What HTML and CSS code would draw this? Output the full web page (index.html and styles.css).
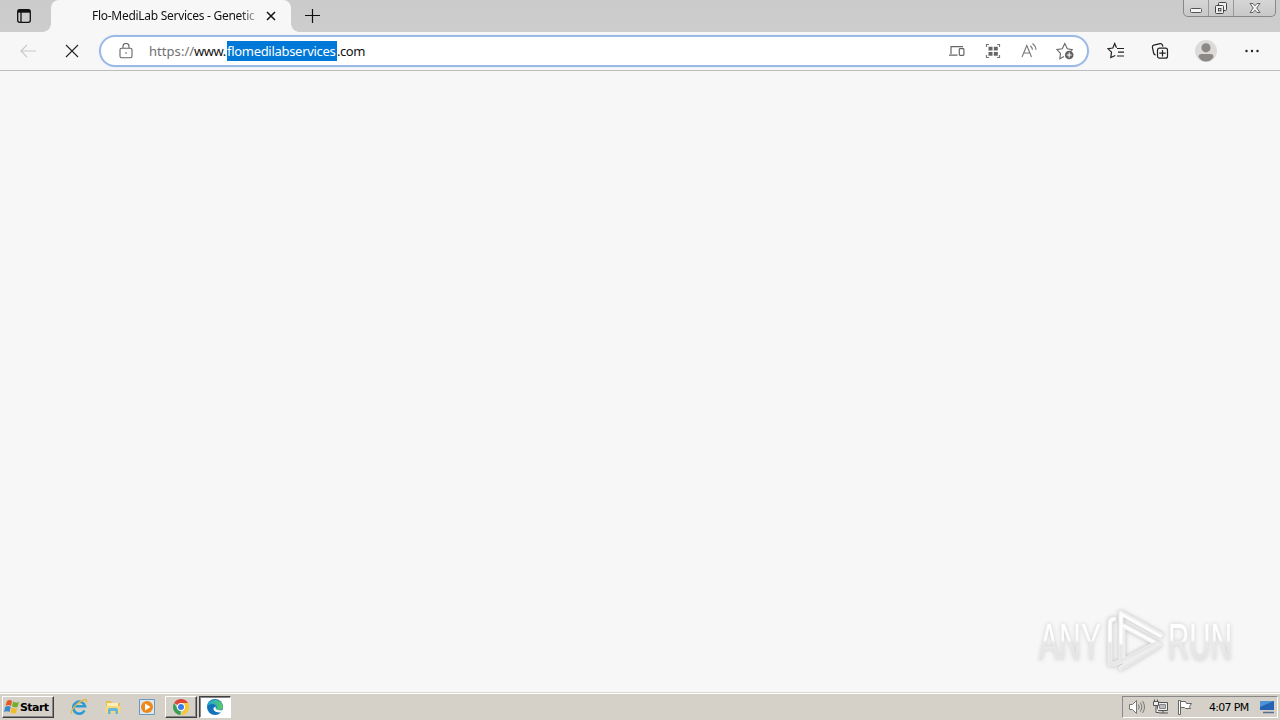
FILE: index.html
```
<!DOCTYPE html>
<html lang="en">
<head>
<meta charset="utf-8">
<title>Flo-MediLab Services - Genetic</title>
<link rel="stylesheet" href="styles.css">
</head>
<body>
<header class="tabstrip">
  <div class="tab-actions"><svg width="16" height="16" viewBox="0 0 16 16" fill="none" stroke="#111" stroke-width="1.3"><rect x="1.7" y="1.7" width="12.6" height="12.6" rx="2"/><path d="M2 3.2h12" stroke-width="3"/><path d="M5 4v10"/></svg></div>
  <div class="tab">
    <span class="tab-title">Flo-MediLab Services - Genetic</span>
    <svg class="tab-close" width="10" height="10" viewBox="0 0 10 10" stroke="#111" stroke-width="1.5"><path d="M1 1l8 8M9 1L1 9"/></svg>
  </div>
  <svg class="new-tab" width="16" height="16" viewBox="0 0 16 16" stroke="#111" stroke-width="1.2"><path d="M8.5 1v14M1 7.5h15"/></svg>
  <div class="window-buttons">
    <div class="wb wb-min"><svg width="14" height="14" viewBox="0 0 14 14"><rect x="1.500" y="7.500" width="11" height="4" rx="1" fill="#f4f4f4" stroke="#555"/></svg></div>
    <div class="wb wb-restore"><svg width="14" height="14" viewBox="0 0 14 14" fill="#eee" stroke="#444"><rect x="4.500" y="1.500" width="8" height="8" rx="1"/><rect x="1.500" y="4.500" width="8" height="8" rx="1"/><rect x="4.500" y="7.500" width="2.400" height="2.400"/></svg></div>
    <div class="wb wb-close"><svg width="14" height="14" viewBox="0 0 14 14"><path d="M2 2.500h3l2 2.300 2-2.300h3L8.700 7l3.300 4.500H9L7 9.200l-2 2.300H2L5.300 7z" fill="#f2f2f2" stroke="#555" stroke-width=".9"/></svg></div>
  </div>
</header>
<nav class="toolbar">
  <svg class="back" width="16" height="14" viewBox="0 0 16 14" fill="none" stroke="#c8c8c8" stroke-width="1.2"><path d="M7 .8L1 7l6 6.2M1 7h15"/></svg>
  <svg class="stop" width="14" height="14" viewBox="0 0 14 14" stroke="#222" stroke-width="1.1"><path d="M1 1l12 12M13 1L1 13"/></svg>
  <div class="address">
    <svg class="lock" width="14" height="16" viewBox="0 0 14 16" fill="none" stroke="#666" stroke-width="1.1"><rect x="1" y="5.2" width="12" height="9.6" rx="1.5"/><path d="M4 5V3.4a3 2.9 0 0 1 6 0V5"/><circle cx="7" cy="10" r=".8" fill="#555" stroke="none"/></svg>
    <div class="url"><span class="scheme">https://</span><span class="www">www.</span><span class="selected">flomedilabservices</span><span class="tld">.com</span></div>
    <div class="address-icons">
      <svg width="18" height="18" viewBox="0 0 18 18" fill="none" stroke="#666" stroke-width="1.200"><path d="M3 12V4.600H15M1 13.200H9.500"/><rect x="11.300" y="6.600" width="4.600" height="6.800" rx=".8"/></svg>
      <svg width="18" height="18" viewBox="0 0 18 18" fill="none" stroke="#777" stroke-width="1.200"><path d="M2.500 5V2.500H5M13 2.500h2.500V5M15.500 13v2.500H13M5 15.500H2.500V13"/><path fill="#666" stroke="none" d="M4.500 4.800h4v3.800h-4zM9.800 4.800h4v3.800h-4zM4.500 9.900h4v3.800h-4zM9.800 9.900h4v3.800h-4z"/></svg>
      <svg width="18" height="18" viewBox="0 0 18 18" fill="none" stroke="#777" stroke-width="1.100"><path d="M2 15L6.800 3.500 11.500 15M3.700 11h6.200M10.300 3.700q2 1.600 2.200 4M12.500 1.500q3.300 2.400 3.500 6.300"/></svg>
      <svg width="18" height="18" viewBox="0 0 18 18" fill="none" stroke="#666" stroke-width="1.100"><path d="M8 14.500l-4.200 2.300.7-5.300L1 7.500l5.300-.7L8.800 1.600l2.500 5.200 5 .8-1.300 1.600"/><circle cx="13.200" cy="13" r="4.300" fill="#606060" stroke="none"/><path stroke="#fff" d="M13.200 10.500v5M10.700 13h5"/></svg>
    </div>
  </div>
  <svg class="favorites" width="18" height="18" viewBox="0 0 18 18" fill="none" stroke="#222" stroke-width="1.200"><path d="M9.500 5.800L7.700 1.500 5.800 6 1 6.700l3.500 3.500-.7 5.300 4.500-2"/><path d="M10 6.500h7M11 10.200h6M10 14h7"/></svg>
  <svg class="collections" width="18" height="18" viewBox="0 0 18 18" fill="none" stroke="#222" stroke-width="1.200"><path d="M4.700 13Q3 12.800 2.600 11L1.400 5.200Q1.200 3.600 2.700 3.200l6.500-1.500q1.600-.2 2.200 1.300l.5 1.600"/><rect x="6.500" y="6.200" width="10" height="10" rx="2"/><path d="M11.500 8v6.400M8.300 11.200h6.400"/></svg>
  <svg class="profile" width="22" height="22" viewBox="0 0 22 22"><circle cx="11" cy="11" r="11" fill="#dcdbd9"/><circle cx="11" cy="7.800" r="4.600" fill="#8c8885"/><path d="M3.500 17q0-3 3-3h9q3 0 3 3-3 4.500-7.500 4.500T3.500 17z" fill="#8c8885"/></svg>
  <svg class="more" width="16" height="4" viewBox="0 0 16 4" fill="#222"><circle cx="2.500" cy="2" r="1.200"/><circle cx="8" cy="2" r="1.200"/><circle cx="13.500" cy="2" r="1.200"/></svg>
</nav>
<main class="page">
  <svg class="watermark" width="210" height="70" viewBox="0 0 210 70">
    <defs><linearGradient id="fade" gradientUnits="userSpaceOnUse" x1="0" y1="13" x2="0" y2="51"><stop offset="0" stop-color="#fff"/><stop offset=".48" stop-color="#fcfcfc"/><stop offset=".53" stop-color="#e9e9e9"/><stop offset="1" stop-color="#e5e5e5"/></linearGradient></defs>
    <g class="mark-text" fill="url(#fade)"><text x="9" y="51" textLength="62" lengthAdjust="spacingAndGlyphs">ANY</text><text x="138" y="51" textLength="64" lengthAdjust="spacingAndGlyphs">RUN</text></g>
    <g class="mark-play" fill="none" stroke-linecap="round" stroke-linejoin="round"><path d="M84 10q-4 0-4 4v41h5l7-3M91 52V4l40 22M93 17v35l28-15M94 17l35 19-38 23"/></g>
    <path fill="none" stroke="#fdfdfd" stroke-width="3" stroke-linecap="round" d="M80 32V15q0-5 4-5M91 34V5l39 22M94 17l32 17"/>
    <path fill="none" stroke="#e7e7e7" stroke-width="3" stroke-linecap="round" d="M80 35v20h5l41-21M92 60l37-22M91 37v13"/>
  </svg>
</main>
<footer class="taskbar">
  <div class="start"><svg width="16" height="16" viewBox="0 0 16 16"><path d="M3 2q3-2 5 0L7 7Q4 5 1.500 7z" fill="#e55a24"/><path d="M9 2.500q3 2 6 .2L13.500 8Q10 9 8 7.300z" fill="#72ad2e"/><path d="M1.200 8q3-1.800 5.500 0L5.500 13Q3 11.500 0 13z" fill="#3989cc"/><path d="M7.700 8.500q3 1.800 5.500.5L12 14q-3 1.500-5.500-.7z" fill="#f4bd24"/></svg><span>Start</span></div>
  <div class="quick">
    <svg width="18" height="18" viewBox="0 0 18 18" fill="none"><path d="M14.500 12.500a6 6 0 1 1 .5-4.300H5" stroke="#2e9ad5" stroke-width="2.600"/><path d="M2 15.500C-1 14 7 3.500 15.500 1.500q2 .5.500 3" stroke="#e5ba42" stroke-width="1.300"/></svg>
    <svg width="18" height="18" viewBox="0 0 18 18"><path d="M2 3h5l1 2h8v10H2z" fill="#e7bd53"/><path d="M3 5h11v5H3z" fill="#fbefb5"/><path d="M1.500 8h15v7h-15z" fill="#f6d77e"/><path d="M4 16v-4q0-2 2-2h6q2 0 2 2v4h-2.500v-3h-5v3z" fill="#63b6dc"/></svg>
    <svg width="18" height="18" viewBox="0 0 18 18"><path d="M1.500 1.500h15v15h-15z" fill="#d9e8f3" stroke="#6899bf"/><circle cx="9" cy="9" r="6" fill="#ee8819"/><path d="M7 5.500v7L12.500 9z" fill="#fff"/></svg>
  </div>
  <div class="task"><svg width="16" height="16" viewBox="0 0 16 16"><path d="M8 8L1.100 4A8 8 0 0 1 15 4z" fill="#df4436"/><path d="M8 8l-.5 8A8 8 0 0 1 1.100 4L4.500 10z" fill="#35a055"/><path d="M8 4h7a8 8 0 0 1-7.500 12L11.500 10z" fill="#f6c934"/><circle cx="8" cy="8" r="4" fill="#fff"/><circle cx="8" cy="8" r="3" fill="#3a7bea"/></svg></div>
  <div class="task active"><svg width="16" height="16" viewBox="0 0 16 16"><defs><linearGradient id="edge"><stop stop-color="#1ba5dc"/><stop offset="1" stop-color="#5bcc61"/></linearGradient></defs><circle cx="8" cy="8" r="8" fill="#1472bb"/><path d="M.2 7A8 8 0 0 1 16 8q0 3-4 3-3 0-3-1.500 1-1 .5-2.500Q8 4.500 4.500 5 1.500 5.300.2 7z" fill="url(#edge)"/><path d="M9 7.500q-1 1.500 0 2.600 2 2 6.500.8L14 13.500Q8 14 6.500 10.500 6 8.500 9 7.500z" fill="#fff"/></svg></div>
  <div class="tray">
    <svg width="18" height="16" viewBox="0 0 18 16" fill="#fff" stroke="#777"><path d="M1.500 5.500h3l4-4v13l-4-4h-3z"/><path d="M10.500 5.500q1.500 2.500 0 5M12.500 3.500q3 4.500 0 9M14.500 2q4 6 0 12" fill="none"/></svg>
    <svg width="18" height="16" viewBox="0 0 18 16" fill="#eee" stroke="#555"><path d="M5.500 3.500h10v8h-10zM7 14h9M11 12v2"/><path d="M7.500 5.500h6v4h-6z" fill="#bbb" stroke="#888"/><path d="M1.500 2.500h5v4h-5zM2.500.5v2M5.500.5v2M4 6.500v7h3"/></svg>
    <svg width="18" height="16" viewBox="0 0 18 16" fill="#fff" stroke="#666"><path d="M2.500 15.500V1.500h2v14zM4.500 2.500h5l1 2h5l-2 3 1 2h-5l-1-1h-4z"/></svg>
    <span class="clock">4:07 PM</span>
    <svg width="16" height="14" viewBox="0 0 16 14"><path d="M1 1h14v9H1z" fill="#2463b4"/><path d="M1 1h14L1 7z" fill="#4e93d4"/><path d="M4 12.500h11" stroke="#536f91" stroke-width="1.500"/></svg>
  </div>
</footer>
</body>
</html>
```
FILE: styles.css
```
* { box-sizing: border-box; }
body { margin: 0; width: 1280px; height: 720px; overflow: hidden; display: flex; flex-direction: column; background: #f7f7f7; font-family: "Noto Sans", "Open Sans", sans-serif; color: #111; }
svg { display: block; flex: none; }
.tabstrip { height: 32px; flex: none; display: flex; align-items: flex-start; background: linear-gradient(#cbcbcb, #cdcdcd); }
.tab-actions { width: 51px; height: 32px; padding: 8px 0 0 16px; }
.tab { width: 240px; height: 32px; display: flex; align-items: center; padding: 0 15px 0 41px; background: #f7f7f7; border-radius: 8px 8px 0 0; position: relative; }
.tab::before, .tab::after { content: ""; position: absolute; bottom: 0; width: 8px; height: 8px; }
.tab::before { left: -8px; background: radial-gradient(circle at 0 0, transparent 7.5px, #f7f7f7 8px); }
.tab::after { right: -8px; background: radial-gradient(circle at 100% 0, transparent 7.5px, #f7f7f7 8px); }
.tab-title { width: 166px; font-size: 12px; line-height: 16px; letter-spacing: -.28px; white-space: nowrap; overflow: hidden; -webkit-mask-image: linear-gradient(90deg, #000 148px, transparent 170px); }
.tab-close { margin-left: auto; }
.new-tab { margin: 8px 0 0 13px; }
.window-buttons { display: flex; height: 17px; width: 93px; margin-left: auto; margin-right: 4px; border: 1px solid #888; border-top: 0; border-radius: 0 0 5px 5px; background: linear-gradient(#d6d6d6, #c8c8c8); }
.wb { display: flex; justify-content: center; align-items: center; height: 16px; }
.wb-min { width: 25px; border-right: 1px solid #999; }
.wb-restore { width: 25px; border-right: 1px solid #999; }
.wb-close { flex: 1; }
.toolbar { height: 39px; flex: none; display: flex; align-items: center; padding-left: 20px; border-bottom: 1px solid #bdbdbd; }
.stop { margin-left: 29px; }
.address { width: 990px; height: 32px; margin-left: 20px; border: 2px solid #9cb8e4; border-radius: 16px; background: #fff; display: flex; align-items: center; padding: 0 13px 0 18px; box-shadow: 0 0 0 1px #edf3fb; }
.url { display: flex; margin-left: 16px; font-size: 13px; line-height: 20px; white-space: nowrap; }
.scheme { width: 45px; color: #707070; letter-spacing: .05px; }
.www { width: 33px; letter-spacing: -.45px; }
.selected { width: 110px; color: #fff; background: #0078d7; letter-spacing: -.3px; }
.tld { width: 30px; letter-spacing: -.45px; }
.address-icons { display: flex; gap: 18px; margin-left: auto; }
.favorites { margin-left: 18px; }
.collections { margin-left: 26px; }
.profile { margin-left: 26px; }
.more { margin-left: 27px; }
.page { flex: 1; display: flex; justify-content: flex-end; align-items: flex-end; padding: 0 40px 13px 0; }
.watermark { overflow: visible; }
.mark-text { font: 52px "Liberation Sans", sans-serif; filter: drop-shadow(0 0 2px #ccc); }
.mark-play { stroke: #eee; stroke-width: 5; filter: drop-shadow(0 0 2px #bbb); }
.taskbar { height: 28px; flex: none; display: flex; align-items: center; padding: 1px 2px 0; background: #d5d0c8; border-top: 1px solid #ddd9d2; box-shadow: inset 0 1px #fff; }
.start { width: 52px; height: 22px; display: flex; align-items: center; padding-left: 1px; font: bold 11px "DejaVu Sans", sans-serif; letter-spacing: -.55px; color: #000; border: 1px solid; border-color: #fff #404040 #404040 #fff; box-shadow: inset -1px -1px #888; }
.quick { display: flex; gap: 16px; margin-left: 16px; }
.task { width: 32px; height: 22px; margin-left: 9px; display: grid; place-items: center; border: 1px solid; border-color: #fff #404040 #404040 #fff; box-shadow: inset -1px -1px #888; }
.task.active { margin-left: 2px; background: #fff; border-color: #404040 #fff #fff #404040; box-shadow: inset 1px 1px #888; }
.tray { width: 156px; height: 22px; margin-left: auto; display: flex; align-items: center; gap: 6px; padding-left: 5px; border: 1px solid; border-color: #888 #fff #fff #888; }
.clock { width: 44px; margin-left: 9px; font: 11px "DejaVu Sans", sans-serif; letter-spacing: -.7px; white-space: nowrap; color: #000; }
```
